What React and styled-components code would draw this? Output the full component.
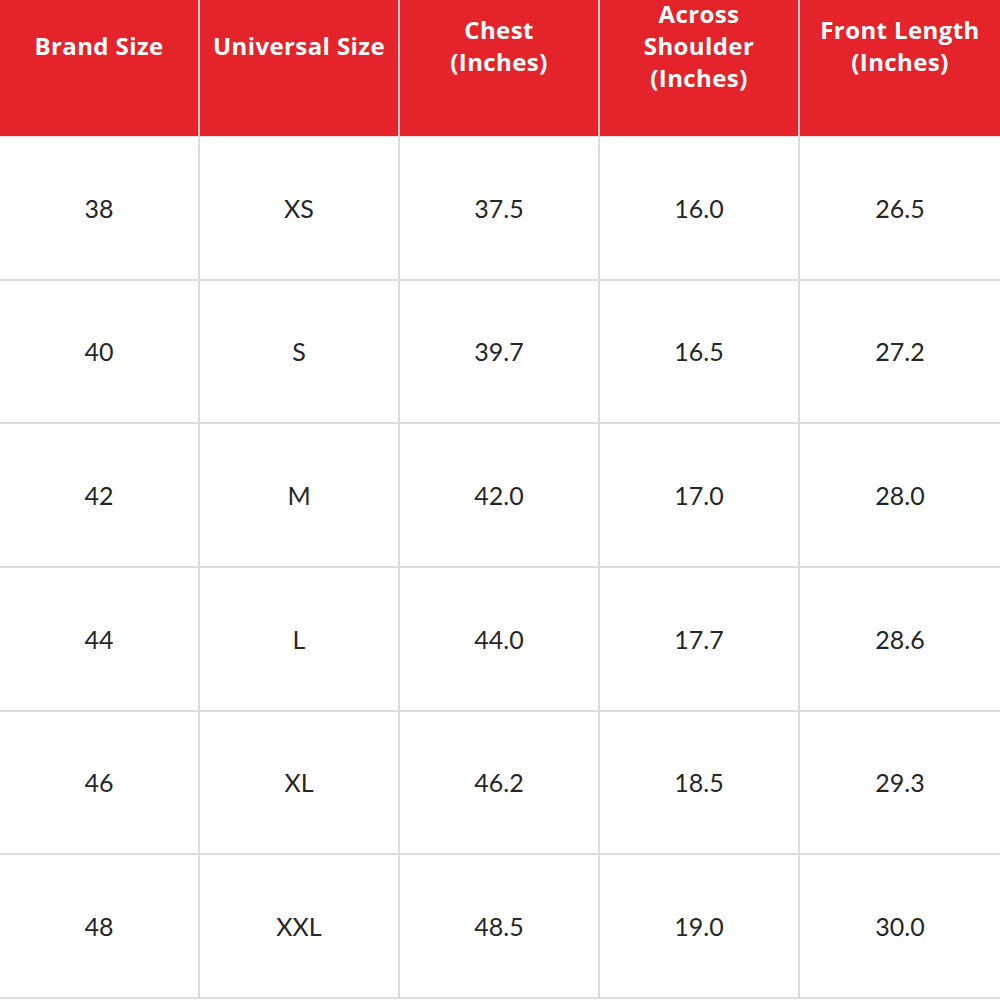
import React from "react";
import styled, { createGlobalStyle } from "styled-components";

const GlobalStyle = createGlobalStyle`
  html, body {
    margin: 0;
    padding: 0;
    background: #ffffff;
  }
  body {
    font-family: Lato, "Open Sans", sans-serif;
  }
`;

const headers = [
  ["Brand Size"],
  ["Universal Size"],
  ["Chest", "(Inches)"],
  ["Across", "Shoulder", "(Inches)"],
  ["Front Length", "(Inches)"],
];

const rows = [
  ["38", "XS", "37.5", "16.0", "26.5"],
  ["40", "S", "39.7", "16.5", "27.2"],
  ["42", "M", "42.0", "17.0", "28.0"],
  ["44", "L", "44.0", "17.7", "28.6"],
  ["46", "XL", "46.2", "18.5", "29.3"],
  ["48", "XXL", "48.5", "19.0", "30.0"],
];

function SizeChart() {
  return (
    <Table>
      {headers.map((lines, i) => (
        <HeadCell key={i} last={i === headers.length - 1}>
          <HeadText>
            {lines.map((l) => (
              <span key={l}>{l}</span>
            ))}
          </HeadText>
        </HeadCell>
      ))}
      {rows.map((row) =>
        row.map((val, i) => (
          <Cell key={row[0] + i} last={i === row.length - 1}>
            {val}
          </Cell>
        ))
      )}
    </Table>
  );
}

const Table = styled.div`
  width: 1000px;
  height: 1000px;
  display: grid;
  grid-template-columns: repeat(5, 1fr);
  grid-template-rows: 137px repeat(6, 1fr);
  box-sizing: border-box;
  padding-bottom: 1px;
`;

const HeadCell = styled.div`
  background: #e4232b;
  color: #ffffff;
  display: flex;
  align-items: center;
  justify-content: center;
  padding-bottom: 44px;
  border-right: ${(p) => (p.last ? "none" : "2px solid #f3c9cb")};
  border-bottom: 1px solid #f6dede;
`;

const HeadText = styled.div`
  display: flex;
  flex-direction: column;
  align-items: center;
  font-family: "Open Sans", Lato, sans-serif;
  font-weight: 700;
  font-size: 24px;
  line-height: 32px;
  letter-spacing: 0.4px;
  white-space: nowrap;
`;

const Cell = styled.div`
  display: flex;
  align-items: center;
  justify-content: center;
  font-size: 25px;
  color: #262626;
  border-right: ${(p) => (p.last ? "none" : "2px solid #dcdcdc")};
  border-bottom: 2px solid #dcdcdc;
`;

export default function App() {
  return (
    <>
      <GlobalStyle />
      <SizeChart />
    </>
  );
}
